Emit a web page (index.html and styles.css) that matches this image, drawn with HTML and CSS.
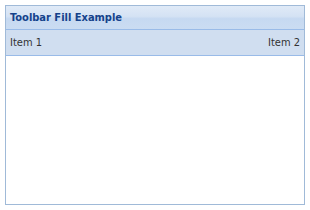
FILE: index.html
```html
<!DOCTYPE html>
<html lang="en">
<head>
    <meta charset="UTF-8">
    <title>Toolbar Fill Example</title>
    <link rel="stylesheet" href="styles.css">
</head>
<body>
    <div class="panel">
        <div class="panel-header">Toolbar Fill Example</div>
        <div class="toolbar">
            <span class="tb-item">Item 1</span>
            <span class="tb-fill"></span>
            <span class="tb-item">Item 2</span>
        </div>
        <div class="panel-body"></div>
    </div>
</body>
</html>
```
FILE: styles.css
```css
* {
    margin: 0;
    padding: 0;
    box-sizing: border-box;
}

body {
    font-family: Tahoma, 'DejaVu Sans Condensed', 'DejaVu Sans', sans-serif;
    font-size: 11px;
    background: #fff;
    padding: 5px;
}

.panel {
    width: 300px;
    height: 200px;
    border: 1px solid #a0bad8;
    display: flex;
    flex-direction: column;
}

.panel-header {
    height: 24px;
    padding: 0 4px;
    line-height: 23px;
    font-weight: bold;
    color: #15428b;
    border-bottom: 1px solid #99bbe8;
    background: linear-gradient(#e0eaf7, #d4e2f4 45%, #c6d9f1 55%, #cadcf2);
}

.toolbar {
    height: 26px;
    display: flex;
    align-items: center;
    padding: 0 4px;
    color: #333;
    background: #d0def0;
    border-bottom: 1px solid #99bbe8;
}

.tb-fill {
    flex: 1;
}

.panel-body {
    flex: 1;
    background: #fff;
}
```
